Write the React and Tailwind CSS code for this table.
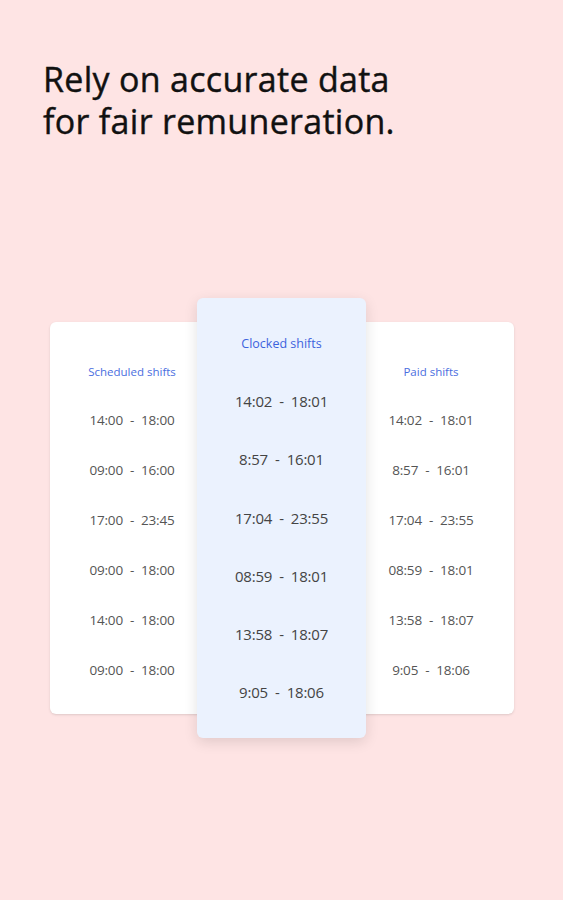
import React from 'react';

const scheduled = ['14:00 - 18:00', '09:00 - 16:00', '17:00 - 23:45', '09:00 - 18:00', '14:00 - 18:00', '09:00 - 18:00'];
const clocked = ['14:02 - 18:01', '8:57 - 16:01', '17:04 - 23:55', '08:59 - 18:01', '13:58 - 18:07', '9:05 - 18:06'];
const paid = ['14:02 - 18:01', '8:57 - 16:01', '17:04 - 23:55', '08:59 - 18:01', '13:58 - 18:07', '9:05 - 18:06'];

const Time = ({ value, className }) => {
    const [a, b] = value.split(' - ');
    return (
        <div className={className}>
            {a}<span className="mx-[7px]">-</span>{b}
        </div>
    );
};

const App = () => {
    return (
        <div className="h-[900px] w-full bg-[#fee4e4] overflow-hidden" style={{ fontFamily: '"Open Sans", "Liberation Sans", sans-serif' }}>
            <h1 className="pl-[43px] pt-[58px] text-[34px] leading-[42px] font-medium text-[#111] tracking-[0.3px] [-webkit-text-stroke:0.4px_#111]">
                Rely on accurate data<br />for fair remuneration.
            </h1>

            {/* cards */}
            <div className="relative mt-[156px] ml-[50px] w-[464px] pt-[24px]">
                <div className="h-[392px] bg-white rounded-[6px] shadow-sm flex">
                    <div className="w-[164px] flex flex-col items-center pt-[42px]">
                        <div className="text-[11.5px] text-[#4a6ee0] h-[16px] leading-[16px]">Scheduled shifts</div>
                        {scheduled.map((t, i) => (
                            <Time key={i} value={t} className="mt-[31px] h-[19px] leading-[19px] text-[13.5px] text-[#555] tracking-[-0.2px]" />
                        ))}
                    </div>
                    <div className="flex-1" />
                    <div className="w-[166px] flex flex-col items-center pt-[42px]">
                        <div className="text-[11.5px] text-[#4a6ee0] h-[16px] leading-[16px]">Paid shifts</div>
                        {paid.map((t, i) => (
                            <Time key={i} value={t} className="mt-[31px] h-[19px] leading-[19px] text-[13.5px] text-[#555] tracking-[-0.2px]" />
                        ))}
                    </div>
                </div>

                <div className="absolute left-[147px] top-0 w-[169px] h-[440px] bg-[#ebf2fe] rounded-[6px] shadow-[0_4px_14px_rgba(0,0,0,0.12)] flex flex-col items-center pt-[37px]">
                    <div className="text-[12.5px] text-[#3d63dd] h-[17px] leading-[17px]">Clocked shifts</div>
                    {clocked.map((t, i) => (
                        <Time key={i} value={t} className={`${i === 0 ? 'mt-[39px]' : 'mt-[38.3px]'} h-[20px] leading-[20px] text-[15px] text-[#444] tracking-[-0.2px]`} />
                    ))}
                </div>
            </div>
        </div>
    );
};

export default App;
